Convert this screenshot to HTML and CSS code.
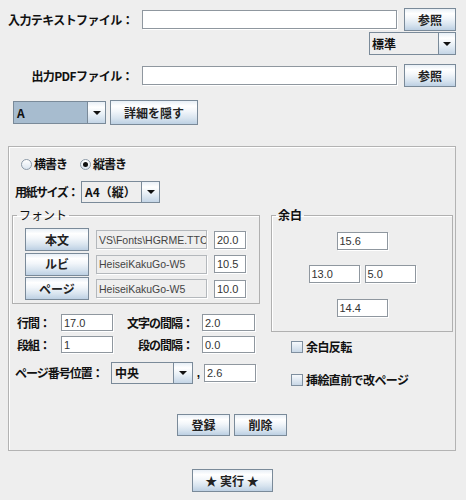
FILE: index.html
```html
<!DOCTYPE html>
<html lang="ja">
<head>
<meta charset="utf-8">
<title>PDF変換</title>
<link rel="stylesheet" href="styles.css">
</head>
<body>
<div class="app">
  <div class="filerow first">
    <span class="flabel">入力テキストファイル：</span>
    <span class="tf"></span>
    <span class="btn ref">参照</span>
  </div>
  <div class="encrow">
    <span class="combo enc"><span class="cv">標準</span><span class="arr"></span></span>
  </div>
  <div class="filerow second">
    <span class="flabel">出力PDFファイル：</span>
    <span class="tf"></span>
    <span class="btn ref">参照</span>
  </div>
  <div class="presetrow">
    <span class="combo preset"><span class="cv">A</span><span class="arr"></span></span>
    <span class="btn detail">詳細を隠す</span>
  </div>

  <div class="panel">
    <div class="radios">
      <span class="radio"><span class="rb"></span>横書き</span>
      <span class="radio"><span class="rb on"></span>縦書き</span>
    </div>
    <div class="paper">
      <span class="plabel">用紙サイズ：</span>
      <span class="combo paperc"><span class="cv">A4（縦）</span><span class="arr"></span></span>
    </div>

    <div class="main">
      <div class="leftcol">
        <fieldset class="group">
          <legend class="lg-plain">フォント</legend>
          <div class="fontrows">
            <div class="fontrow"><span class="btn fbtn">本文</span><span class="tf ro fname">VS\Fonts\HGRME.TTC</span><span class="tf fsize">20.0</span></div>
            <div class="fontrow"><span class="btn fbtn">ルビ</span><span class="tf ro fname">HeiseiKakuGo-W5</span><span class="tf fsize">10.5</span></div>
            <div class="fontrow"><span class="btn fbtn">ページ</span><span class="tf ro fname">HeiseiKakuGo-W5</span><span class="tf fsize">10.0</span></div>
          </div>
        </fieldset>
        <div class="params">
          <div class="prow"><span class="pl">行間：</span><span class="tf pf">17.0</span><span class="pl2">文字の間隔：</span><span class="tf pf2">2.0</span></div>
          <div class="prow"><span class="pl">段組：</span><span class="tf pf">1</span><span class="pl2">段の間隔：</span><span class="tf pf2">0.0</span></div>
        </div>
        <div class="pagerow">
          <span class="pglabel">ページ番号位置：</span>
          <span class="combo pagec"><span class="cv">中央</span><span class="arr"></span></span>
          <span class="comma">,</span>
          <span class="tf pf3">2.6</span>
        </div>
      </div>

      <div class="rightcol">
        <fieldset class="group">
          <legend class="lg-bold">余白</legend>
          <div class="mgrid">
            <div class="mrow"><span class="tf mf">15.6</span></div>
            <div class="mrow mid"><span class="tf mf">13.0</span><span class="tf mf">5.0</span></div>
            <div class="mrow last"><span class="tf mf">14.4</span></div>
          </div>
        </fieldset>
        <div class="checks">
          <span class="check c1"><span class="cb"></span>余白反転</span>
          <span class="check c2"><span class="cb"></span>挿絵直前で改ページ</span>
        </div>
      </div>
    </div>

    <div class="actions">
      <span class="btn act">登録</span>
      <span class="btn act">削除</span>
    </div>
  </div>

  <div class="execrow">
    <span class="btn exec">★ 実行 ★</span>
  </div>
</div>
</body>
</html>
```

FILE: styles.css
```css
body {
  margin: 0;
  background: #eeeeee;
  font-family: "Noto Sans CJK JP", sans-serif;
  font-size: 12px;
  line-height: 14px;
  color: #111;
}

.app {
  width: 448px;
  padding: 0 10px 0 8px;
}

/* ---------- generic controls ---------- */
.tf {
  box-sizing: border-box;
  display: flex;
  align-items: center;
  height: 19px;
  padding: 0 2px;
  background: #ffffff;
  border: 1px solid #8f979f;
  box-shadow: 1px 1px 0 #ffffff;
  font-family: "Liberation Sans", sans-serif;
  font-size: 11px;
  color: #333;
  white-space: nowrap;
  overflow: hidden;
}
.tf.ro {
  background: #eeeeee;
  border-color: #b4b8bc;
}

.btn {
  box-sizing: border-box;
  display: inline-flex;
  align-items: center;
  justify-content: center;
  height: 23px;
  border: 1px solid #7a8a99;
  background: linear-gradient(to bottom, #e8eff6 0%, #ffffff 22%, #f2f6fa 45%, #d8e4ef 75%, #bdd0e3 100%);
  font-weight: bold;
  color: #222;
  white-space: nowrap;
}

.combo {
  box-sizing: border-box;
  display: flex;
  height: 23px;
  border: 1px solid #7a8a99;
  background: #eeeeee;
}
.combo .cv {
  flex: 1;
  display: flex;
  align-items: center;
  padding-left: 3px;
  font-weight: bold;
  white-space: nowrap;
  overflow: hidden;
}
.combo .arr {
  flex: none;
  width: 16px;
  display: flex;
  align-items: center;
  justify-content: center;
  border-left: 1px solid #7a8a99;
  background: linear-gradient(to bottom, #e8eff6 0%, #ffffff 25%, #e6eef5 60%, #c4d5e6 100%);
}
.combo .arr::after {
  content: "";
  border-left: 4px solid transparent;
  border-right: 4px solid transparent;
  border-top: 4px solid #111;
}

/* ---------- top file rows ---------- */
.filerow {
  display: grid;
  grid-template-columns: 127px 255px 52px;
  column-gap: 7px;
  align-items: center;
  height: 23px;
}
.first { margin-top: 8px; }
.second { margin-top: 9px; }
.flabel {
  font-weight: bold;
  text-align: right;
  padding-right: 2px;
  white-space: nowrap;
  letter-spacing: -0.6px;
}

.encrow {
  display: flex;
  justify-content: flex-end;
  margin-top: 1px;
}
.combo.enc { width: 87px; height: 23px; }
.combo.enc .cv { padding-left: 2px; }

.presetrow {
  display: flex;
  align-items: center;
  gap: 4px;
  margin-top: 13px;
  margin-left: 5px;
  height: 25px;
}
.combo.preset { width: 93px; height: 23px; }
.combo.preset .arr { width: 17px; }
.combo.preset .cv { background: #a7bccf; }
.btn.detail { width: 88px; height: 25px; }

/* ---------- panel ---------- */
.panel {
  margin-top: 21px;
  border: 1px solid #b3b3b3;
  box-shadow: inset 1px 1px 0 #ffffff;
  padding-bottom: 14px;
}

.radios {
  display: flex;
  align-items: center;
  height: 16px;
  margin-top: 9px;
  margin-left: 12px;
  gap: 13px;
}
.radio {
  display: flex;
  align-items: center;
  gap: 2px;
  font-weight: bold;
  letter-spacing: -1px;
}
.rb {
  box-sizing: border-box;
  width: 11px;
  height: 11px;
  border-radius: 50%;
  border: 1px solid #8c9aa8;
  background: linear-gradient(to bottom, #ffffff, #dbe5ef);
  display: flex;
  align-items: center;
  justify-content: center;
}
.rb.on::after {
  content: "";
  width: 5px;
  height: 5px;
  border-radius: 50%;
  background: #111;
}

.paper {
  display: flex;
  align-items: center;
  margin-top: 9px;
  margin-left: 6px;
  height: 22px;
}
.plabel { flex: none; font-weight: bold; white-space: nowrap; width: 66px; letter-spacing: -1.5px; }
.combo.paperc { flex: none; width: 79px; height: 22px; }
.combo.paperc .arr { width: 17px; }
.combo.paperc .cv { padding-left: 3px; overflow: visible; }

.main {
  display: grid;
  grid-template-columns: 248px 182px;
  column-gap: 11px;
  margin-left: 3px;
  margin-top: 5px;
}

.group {
  margin: 0;
  padding: 0;
  min-inline-size: 0;
  border: 1px solid #b0b0b0;
  box-shadow: inset 1px 1px 0 #ffffff;
}
.group legend {
  margin-left: 4px;
  padding: 0 2px;
  line-height: 14px;
  color: #111;
}
.lg-plain { font-weight: normal; }
.lg-bold { font-weight: bold; }

.fontrows {
  display: flex;
  flex-direction: column;
  gap: 1.5px;
  padding: 6px 0 3px 12px;
}
.fontrow {
  display: flex;
  align-items: center;
  gap: 7px;
}
.btn.fbtn { width: 64px; height: 23px; }
.tf.fname { width: 111px; height: 19px; font-size: 10.5px; color: #444; }
.tf.fsize { width: 32px; height: 18px; }

.params {
  margin-top: 10px;
  margin-left: 5px;
  display: flex;
  flex-direction: column;
  gap: 5px;
}
.prow {
  display: grid;
  grid-template-columns: 44px 52px 89px 53px;
  align-items: center;
  height: 17px;
}
.pl { font-weight: bold; white-space: nowrap; letter-spacing: -1px; }
.pl2 { font-weight: bold; white-space: nowrap; text-align: right; padding-right: 9px; letter-spacing: -1px; }
.tf.pf, .tf.pf2 { height: 17px; }

.pagerow {
  display: flex;
  align-items: center;
  margin-top: 9px;
  margin-left: 3px;
  height: 22px;
}
.pglabel { font-weight: bold; white-space: nowrap; width: 96px; letter-spacing: -1px; }
.combo.pagec { width: 82px; height: 22px; }
.combo.pagec .arr { width: 18px; }
.comma {
  width: 11px;
  text-align: center;
  font-family: "Liberation Sans", sans-serif;
  font-weight: bold;
  font-size: 12px;
}
.tf.pf3 { width: 52px; height: 18px; }

.mgrid {
  display: flex;
  flex-direction: column;
  padding: 10px 0 14px 0;
}
.mrow {
  display: flex;
  justify-content: center;
  gap: 5px;
}
.mrow.mid { margin-top: 15px; }
.mrow.last { margin-top: 16px; }
.tf.mf { width: 51px; height: 18px; }

.checks {
  display: flex;
  flex-direction: column;
  margin-left: 20px;
}
.check {
  display: flex;
  align-items: center;
  gap: 3px;
  height: 14px;
  font-weight: bold;
  white-space: nowrap;
  letter-spacing: -0.6px;
}
.check.c1 { margin-top: 8px; }
.check.c2 { margin-top: 19px; }
.cb {
  box-sizing: border-box;
  width: 12px;
  height: 12px;
  border: 1px solid #7f8f9f;
  background: linear-gradient(to bottom, #f6f9fc, #c9d8e7);
}

.actions {
  display: flex;
  justify-content: center;
  gap: 4px;
  margin-top: 27px;
}
.btn.act { width: 53px; height: 22px; }

.execrow {
  display: flex;
  justify-content: center;
  margin-top: 18px;
}
.btn.exec { width: 81px; height: 23px; }
```
